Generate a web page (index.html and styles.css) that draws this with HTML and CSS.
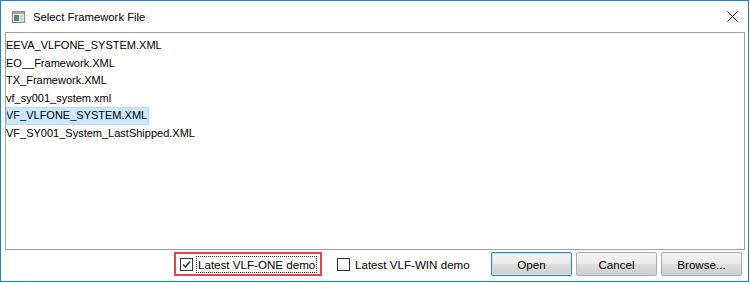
FILE: index.html
```html
<!DOCTYPE html>
<html lang="en">
<head>
    <meta charset="UTF-8">
    <title>Select Framework File</title>
    <link rel="stylesheet" href="styles.css">
</head>
<body>
    <div class="window">
        <!-- title bar -->
        <div class="titlebar">
            <svg class="app-icon" width="13" height="12" viewBox="0 0 13 12">
                <rect x="0.5" y="0.5" width="12" height="11" fill="#e8e8e8" stroke="#8a8a8a"/>
                <rect x="1" y="1" width="11" height="2" fill="#9aa7b4"/>
                <rect x="2" y="4" width="5" height="6" fill="#4e8a8a"/>
                <rect x="8" y="4" width="3" height="6" fill="#c8d4d8"/>
            </svg>
            <span class="title">Select Framework File</span>
            <svg class="close" width="11" height="11" viewBox="0 0 11 11">
                <path d="M0.5 0.5 L10.5 10.5 M10.5 0.5 L0.5 10.5" stroke="#111" stroke-width="1"/>
            </svg>
        </div>

        <!-- file list -->
        <div class="file-list">
            <div class="file-item">EEVA_VLFONE_SYSTEM.XML</div>
            <div class="file-item">EO__Framework.XML</div>
            <div class="file-item">TX_Framework.XML</div>
            <div class="file-item">vf_sy001_system.xml</div>
            <div class="file-item selected">VF_VLFONE_SYSTEM.XML</div>
            <div class="file-item">VF_SY001_System_LastShipped.XML</div>
        </div>

        <!-- bottom row -->
        <div class="footer">
            <div class="highlight-box">
                <label class="check">
                    <span class="box checked">
                        <svg width="11" height="11" viewBox="0 0 11 11">
                            <path d="M2 5.5 L4.5 8 L9 2.5" fill="none" stroke="#333" stroke-width="1.6"/>
                        </svg>
                    </span>
                    <span class="check-label focused">Latest VLF-ONE demo</span>
                </label>
            </div>
            <label class="check second">
                <span class="box"></span>
                <span class="check-label">Latest VLF-WIN demo</span>
            </label>
            <button class="btn default">Open</button>
            <button class="btn">Cancel</button>
            <button class="btn">Browse...</button>
        </div>
    </div>
</body>
</html>
```

FILE: styles.css
```css
* {
    margin: 0;
    padding: 0;
    box-sizing: border-box;
}

body {
    background-color: #fff;
    font-family: 'Liberation Sans', Arial, sans-serif;
    font-size: 12px;
    color: #000;
}

.window {
    width: 749px;
    height: 282px;
    border: 1px solid #1883d7;
    background-color: #fff;
    display: flex;
    flex-direction: column;
}

.titlebar {
    height: 31px;
    display: flex;
    align-items: center;
    padding-left: 11px;
    padding-right: 10px;
}

.app-icon {
    margin-right: 8px;
}

.title {
    flex: 1;
    font-size: 11.3px;
    padding-top: 1px;
}

.file-list {
    margin-left: 4px;
    width: 740px;
    height: 218px;
    border: 1px solid #a0a0a0;
    padding-top: 4px;
}

.file-item {
    height: 17.6px;
    line-height: 17.6px;
    font-size: 11px;
    white-space: nowrap;
    width: max-content;
}

.file-item.selected {
    background-color: #cce8ff;
    outline: 1px solid #b8daf5;
    outline-offset: -1px;
    width: 143px;
}

.footer {
    flex: 1;
    display: flex;
    align-items: flex-start;
    padding-left: 173px;
    padding-top: 2px;
}

.highlight-box {
    width: 148px;
    height: 24px;
    border: 2px solid #e04747;
    display: flex;
    align-items: center;
    padding-left: 4px;
}

.check {
    display: flex;
    align-items: center;
    white-space: nowrap;
    font-size: 11.6px;
}

.check.second {
    margin-left: 15px;
    width: 154px;
    height: 24px;
}

.box {
    width: 13px;
    height: 13px;
    border: 1px solid #333;
    background-color: #fff;
    display: flex;
    align-items: center;
    justify-content: center;
    margin-right: 4px;
}

.check-label {
    padding: 1px 1px;
}

.check-label.focused {
    outline: 1px dotted #333;
    outline-offset: 0;
}

.btn {
    width: 81px;
    height: 24px;
    margin-right: 4px;
    font-family: 'Liberation Sans', Arial, sans-serif;
    font-size: 11.6px;
    color: #000;
    border: 1px solid #acacac;
    border-radius: 2px;
    background: linear-gradient(#f2f2f2, #ebebeb 50%, #dddddd 50%, #cfcfcf);
}

.btn.default {
    border-color: #3c7fb1;
    box-shadow: inset 0 0 0 1px #c4e5f6;
}
```
